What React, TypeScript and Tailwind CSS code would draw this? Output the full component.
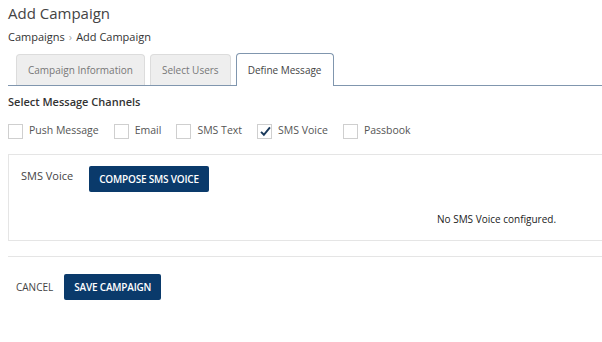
import React from "react";

const channels = [
  { label: "Push Message", checked: false },
  { label: "Email", checked: false },
  { label: "SMS Text", checked: false },
  { label: "SMS Voice", checked: true },
  { label: "Passbook", checked: false },
];

function Box({ checked }: { checked: boolean }) {
  return (
    <span className="relative w-[15px] h-[15px] border border-[#cfcfcf] bg-white shrink-0">
      {checked && (
        <svg viewBox="0 0 16 16" className="absolute left-[1px] top-[0px] w-[13px] h-[13px]">
          <path d="M2.5 8.5 L6 12 L13.5 3" fill="none" stroke="#1a3a5c" strokeWidth="2.4" />
        </svg>
      )}
    </span>
  );
}

export default function App() {
  return (
    <div className="w-[602px] h-[342px] bg-white overflow-hidden text-[#333]" style={{ fontFamily: '"Open Sans", sans-serif' }}>
      <div className="pl-[8px]">
        <h1 className="pt-[3px] text-[15px] leading-[20px] text-[#444]">Add Campaign</h1>
        <div className="mt-[7px] text-[11px] leading-[14px] text-[#333] flex items-center">
          <span>Campaigns</span>
          <span className="mx-[4px] text-[#aaa]">›</span>
          <span>Add Campaign</span>
        </div>
        <div className="mt-[10px] flex items-end border-b border-[#8096ae] pl-[8px] h-[32px]">
          <div className="h-[31px] px-[11px] mr-[5px] flex items-center bg-[#eeeeee] border border-b-0 border-[#dcdcdc] rounded-t-[4px] text-[10px] text-[#777]">
            Campaign Information
          </div>
          <div className="h-[31px] px-[11px] mr-[5px] flex items-center bg-[#eeeeee] border border-b-0 border-[#dcdcdc] rounded-t-[4px] text-[10px] text-[#777]">
            Select Users
          </div>
          <div className="h-[33px] -mb-[1px] px-[11px] flex items-center bg-white border border-b-0 border-[#8096ae] rounded-t-[4px] text-[10px] text-[#444]">
            Define Message
          </div>
        </div>
        <div className="mt-[8px] text-[11px] leading-[16px] font-semibold text-[#333]">Select Message Channels</div>
        <div className="mt-[13px] flex items-center h-[16px]">
          {channels.map((c) => (
            <label key={c.label} className="flex items-center mr-[15px]">
              <Box checked={c.checked} />
              <span className="ml-[6px] text-[10.5px] text-[#555]">{c.label}</span>
            </label>
          ))}
        </div>
        <div className="mt-[15px] border border-[#e5e5e5] border-r-0 h-[87px] px-[12px] pt-[11px]">
          <div className="flex items-start">
            <span className="text-[11px] text-[#444] mt-[2px]">SMS Voice</span>
            <button className="ml-[16px] h-[26px] px-[10px] bg-[#0a3a6b] text-white text-[10px] font-semibold rounded-[2px] tracking-[-0.2px]">
              COMPOSE SMS VOICE
            </button>
          </div>
          <div className="mt-[20px] text-[10px] text-[#222] pl-[416px]">No SMS Voice configured.</div>
        </div>
        <div className="mt-[15px] border-t border-[#e5e5e5]" />
        <div className="mt-[17px] flex items-center pl-[8px]">
          <span className="text-[10px] text-[#444]">CANCEL</span>
          <button className="ml-[11px] h-[26px] px-[10px] bg-[#0a3a6b] text-white text-[10px] font-semibold rounded-[2px] tracking-[-0.2px]">
            SAVE CAMPAIGN
          </button>
        </div>
      </div>
    </div>
  );
}
